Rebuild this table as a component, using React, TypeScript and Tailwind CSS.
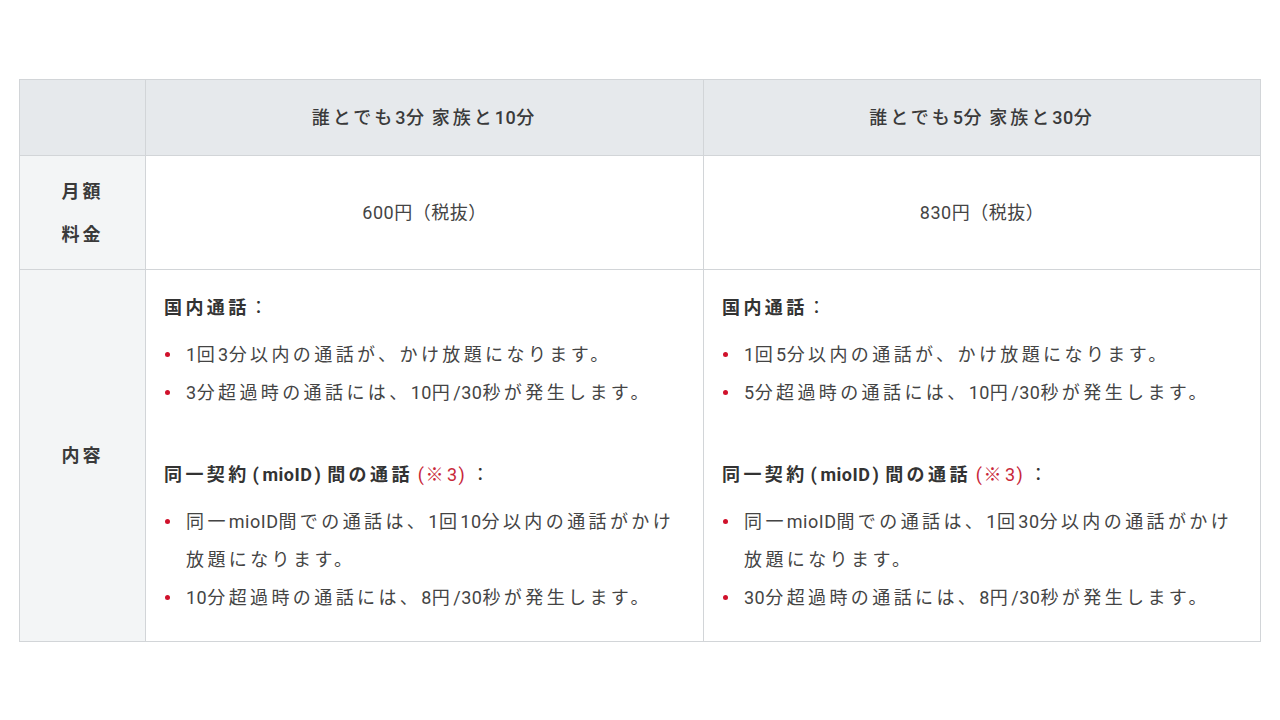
import React from 'react';

interface Plan {
  id: number;
  title: string;
  price: string;
  domestic: string[];
  family: string[];
}

const plans: Plan[] = [
  {
    id: 1,
    title: '誰とでも3分 家族と10分',
    price: '600円（税抜）',
    domestic: ['1回3分以内の通話が、かけ放題になります。', '3分超過時の通話には、10円/30秒が発生します。'],
    family: ['同一mioID間での通話は、1回10分以内の通話がかけ放題になります。', '10分超過時の通話には、8円/30秒が発生します。']
  },
  {
    id: 2,
    title: '誰とでも5分 家族と30分',
    price: '830円（税抜）',
    domestic: ['1回5分以内の通話が、かけ放題になります。', '5分超過時の通話には、10円/30秒が発生します。'],
    family: ['同一mioID間での通話は、1回30分以内の通話がかけ放題になります。', '30分超過時の通話には、8円/30秒が発生します。']
  }
];

const font = { fontFamily: 'Roboto, "Noto Sans CJK JP", sans-serif' };

// latin runs get normal spacing, CJK keeps the wide tracking of the parent
function Sp({ text }: { text: string }) {
  const parts = text.split(/([0-9A-Za-z/() ]+)/);
  return (
    <>
      {parts.map((s, i) =>
        /[0-9A-Za-z/() ]/.test(s) ? (
          <span key={i} className="tracking-[0.5px]">
            {s}
          </span>
        ) : (
          s
        )
      )}
    </>
  );
}

function Bullets({ items }: { items: string[] }) {
  return (
    <ul className="mt-[9px]">
      {items.map((t) => (
        <li key={t} className="relative pl-[22px] leading-[38px]">
          <span className="absolute left-[1px] top-[16px] w-[5px] h-[5px] rounded-full bg-[#d0112b]" />
          <Sp text={t} />
        </li>
      ))}
    </ul>
  );
}

export default function App() {
  return (
    <div className="w-[1280px] h-[720px] bg-white pt-[79px] pl-[19px] text-[#444]" style={font}>
      <table className="border-collapse table-fixed w-[1241px]">
        <colgroup>
          <col className="w-[126px]" />
          <col className="w-[558px]" />
          <col className="w-[557px]" />
        </colgroup>
        <tbody>
          <tr className="h-[76px]">
            <th className="border border-[#d2d5d8] bg-[#e6e9ec]" />
            {plans.map((p) => (
              <th
                key={p.id}
                className="border border-[#d2d5d8] bg-[#e6e9ec] text-[18px] font-medium tracking-[3px] text-[#3a3a3a]"
              >
                <Sp text={p.title} />
              </th>
            ))}
          </tr>
          <tr className="h-[114px]">
            <th className="border border-[#d2d5d8] bg-[#f3f5f6] text-[18px] font-bold leading-[43px] tracking-[3px] text-[#3a3a3a]">
              月額
              <br />
              料金
            </th>
            {plans.map((p) => (
              <td key={p.id} className="border border-[#d2d5d8] text-center text-[18px] tracking-[0.5px]">
                {p.price}
              </td>
            ))}
          </tr>
          <tr className="h-[372px]">
            <th className="border border-[#d2d5d8] bg-[#f3f5f6] text-[18px] font-bold tracking-[3px] text-[#3a3a3a]">
              内容
            </th>
            {plans.map((p) => (
              <td
                key={p.id}
                className="border border-[#d2d5d8] align-top pt-[19px] pb-[21px] pl-[18px] pr-[18px] text-[18px] tracking-[3.4px]"
              >
                <p className="leading-[38px] text-[#333]">
                  <span className="font-bold">国内通話</span>：
                </p>
                <Bullets items={p.domestic} />
                <p className="leading-[38px] mt-[44px] text-[#333]">
                  <span className="font-bold">
                    同一契約
                    <span className="tracking-[0.5px]">
                      <span className="ml-[3px] mr-[3px]">(</span>mioID<span className="ml-[2px] mr-[6px]">)</span>
                    </span>
                    間の通話
                  </span>
                  <span className="text-[#c8283a]">
                    <span className="tracking-[0.5px] ml-[5px] mr-[1px]">(</span>※
                    <span className="tracking-[0.5px]">
                      3<span className="ml-[1px]">)</span>
                    </span>
                  </span>
                  <span className="ml-[6px]">：</span>
                </p>
                <Bullets items={p.family} />
              </td>
            ))}
          </tr>
        </tbody>
      </table>
    </div>
  );
}
